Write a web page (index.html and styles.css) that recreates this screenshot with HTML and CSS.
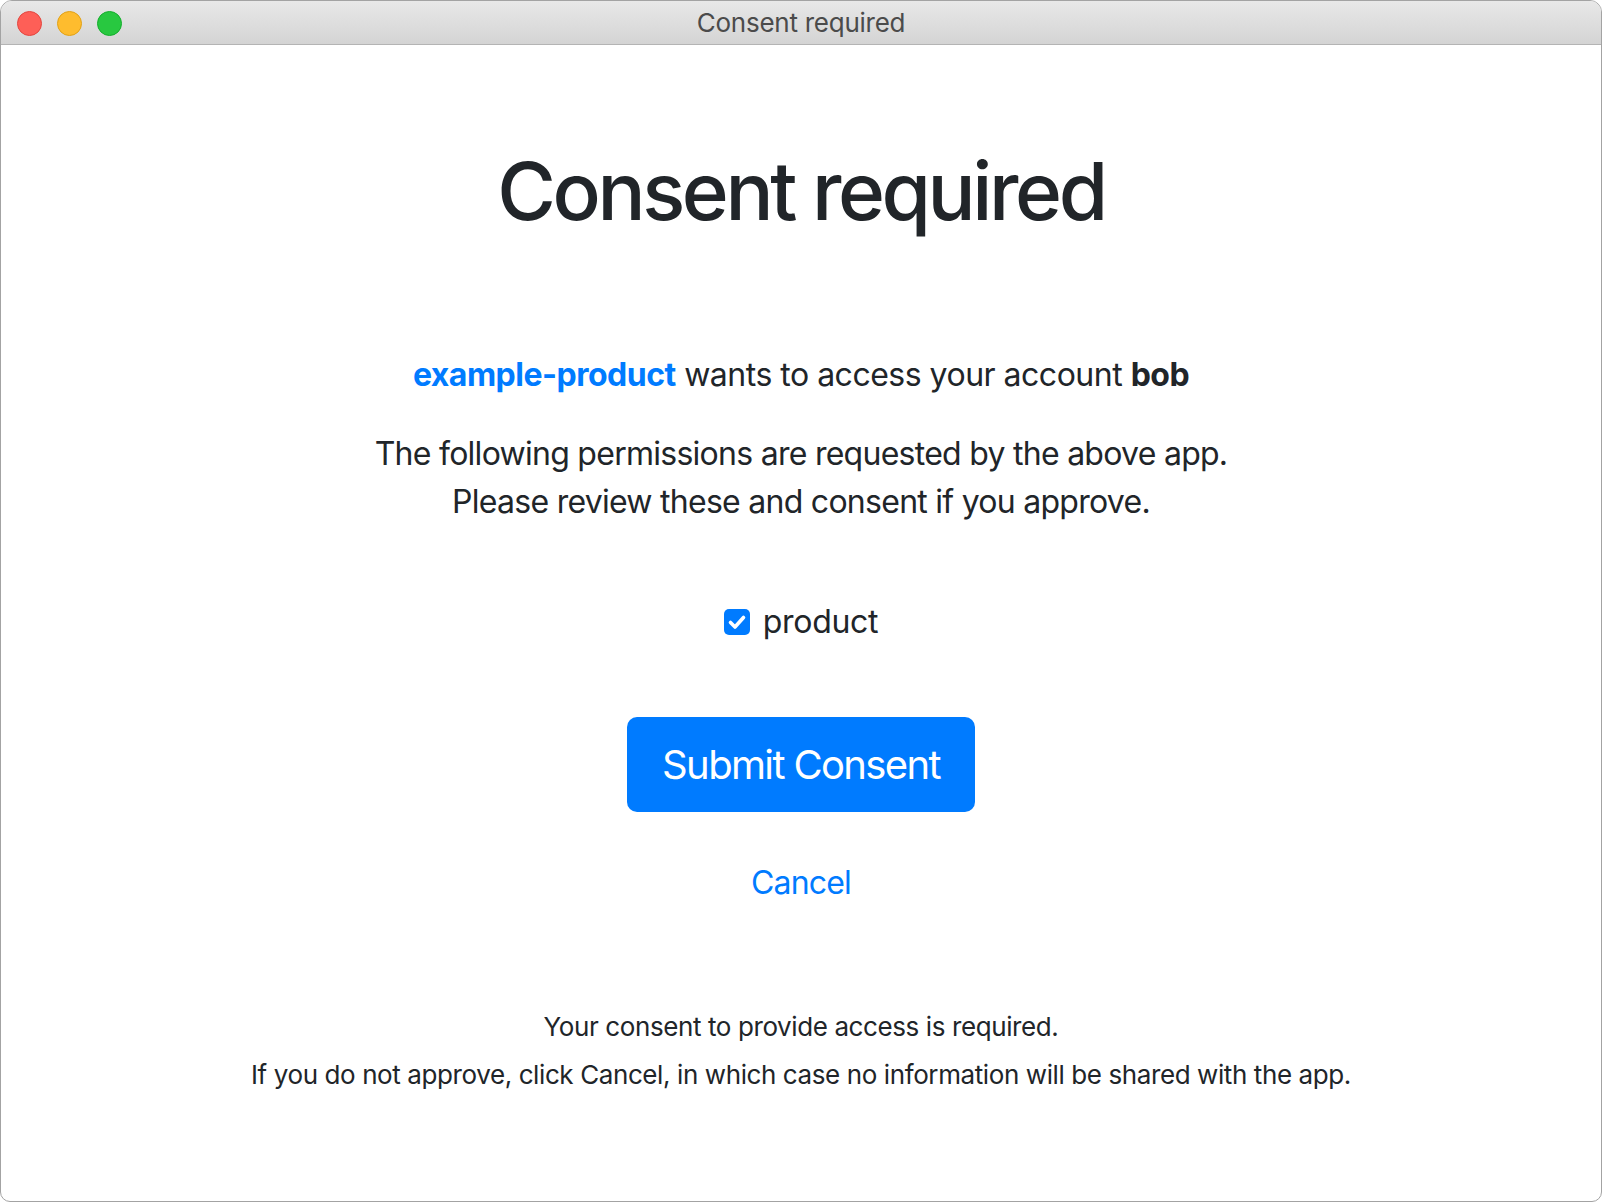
FILE: index.html
```html
<!DOCTYPE html>
<html lang="en">
<head>
<meta charset="utf-8">
<title>Consent required</title>
<link rel="stylesheet" href="styles.css">
</head>
<body>
<div class="window">
  <div class="titlebar">
    <div class="lights">
      <span class="light red"></span>
      <span class="light yellow"></span>
      <span class="light green"></span>
    </div>
    <div class="title">Consent required</div>
  </div>
  <main class="content">
    <h1 class="heading">Consent required</h1>
    <p class="lead"><a class="app" href="#">example-product</a> wants to access your account <strong>bob</strong></p>
    <p class="perm">The following permissions are requested by the above app.<br>Please review these and consent if you approve.</p>
    <div class="check-row">
      <span class="checkbox">
        <svg viewBox="0 0 26 26" width="26" height="26"><path d="M6.5 13.5 L11 18 L19.5 8.5" fill="none" stroke="#fff" stroke-width="3.6" stroke-linecap="round" stroke-linejoin="round"/></svg>
      </span>
      <span class="check-label">product</span>
    </div>
    <button class="btn">Submit Consent</button>
    <a class="cancel" href="#">Cancel</a>
    <div class="footer">
      <p>Your consent to provide access is required.</p>
      <p>If you do not approve, click Cancel, in which case no information will be shared with the app.</p>
    </div>
  </main>
</div>
</body>
</html>
```

FILE: styles.css
```css
html, body {
  margin: 0;
  padding: 0;
  background: #ffffff;
}
body {
  width: 1602px;
  height: 1202px;
  font-family: Inter, "Liberation Sans", sans-serif;
  color: #212529;
}
.window {
  box-sizing: border-box;
  width: 1602px;
  height: 1202px;
  border: 1px solid #a3a3a3;
  border-radius: 12px 12px 10px 10px;
  overflow: hidden;
  display: flex;
  flex-direction: column;
  background: #fff;
}
.titlebar {
  flex: 0 0 auto;
  height: 43px;
  border-bottom: 1px solid #b4b4b4;
  background: linear-gradient(#e8e8e8, #d4d4d4);
  display: flex;
  align-items: center;
  justify-content: center;
  position: relative;
}
.lights {
  position: absolute;
  left: 16px;
  top: 10px;
  display: flex;
  gap: 15px;
}
.light {
  box-sizing: border-box;
  width: 25px;
  height: 25px;
  border-radius: 50%;
  display: block;
}
.red { background: #fe5f57; border: 1px solid #e2463f; }
.yellow { background: #febc2e; border: 1px solid #e1a116; }
.green { background: #28c840; border: 1px solid #14ae2c; }
.title {
  font-size: 26px;
  color: #4b4b4b;
  letter-spacing: -0.25px;
}
.content {
  flex: 1 1 auto;
  display: flex;
  flex-direction: column;
  align-items: center;
  text-align: center;
}
.heading {
  margin: 98px 0 0;
  font-size: 80px;
  line-height: 96px;
  font-weight: 500;
  letter-spacing: -3.4px;
}
.lead {
  margin: 112px 0 0;
  font-size: 32px;
  line-height: 48px;
  letter-spacing: -0.5px;
}
.app {
  color: #007bff;
  font-weight: 700;
  text-decoration: none;
}
.lead strong { font-weight: 700; }
.perm {
  margin: 31px 0 0;
  font-size: 32px;
  line-height: 48px;
  letter-spacing: -0.73px;
}
.check-row {
  margin-top: 72px;
  display: flex;
  align-items: center;
  gap: 13px;
  height: 48px;
}
.checkbox {
  width: 26px;
  height: 26px;
  border-radius: 5px;
  background: #007bff;
  display: block;
}
.checkbox svg { display: block; }
.check-label {
  font-size: 32px;
  line-height: 48px;
  letter-spacing: -0.3px;
}
.btn {
  margin-top: 71px;
  width: 348px;
  height: 95px;
  border: none;
  border-radius: 10px;
  background: #007bff;
  color: #fff;
  font-family: Inter, "Liberation Sans", sans-serif;
  font-size: 40px;
  letter-spacing: -1.65px;
  padding: 0;
}
.cancel {
  margin-top: 47px;
  font-size: 32px;
  line-height: 48px;
  color: #007bff;
  text-decoration: none;
  letter-spacing: -0.8px;
}
.footer {
  margin-top: 96px;
}
.footer p {
  margin: 0;
  font-size: 26px;
  line-height: 48px;
  letter-spacing: -0.4px;
}
```
